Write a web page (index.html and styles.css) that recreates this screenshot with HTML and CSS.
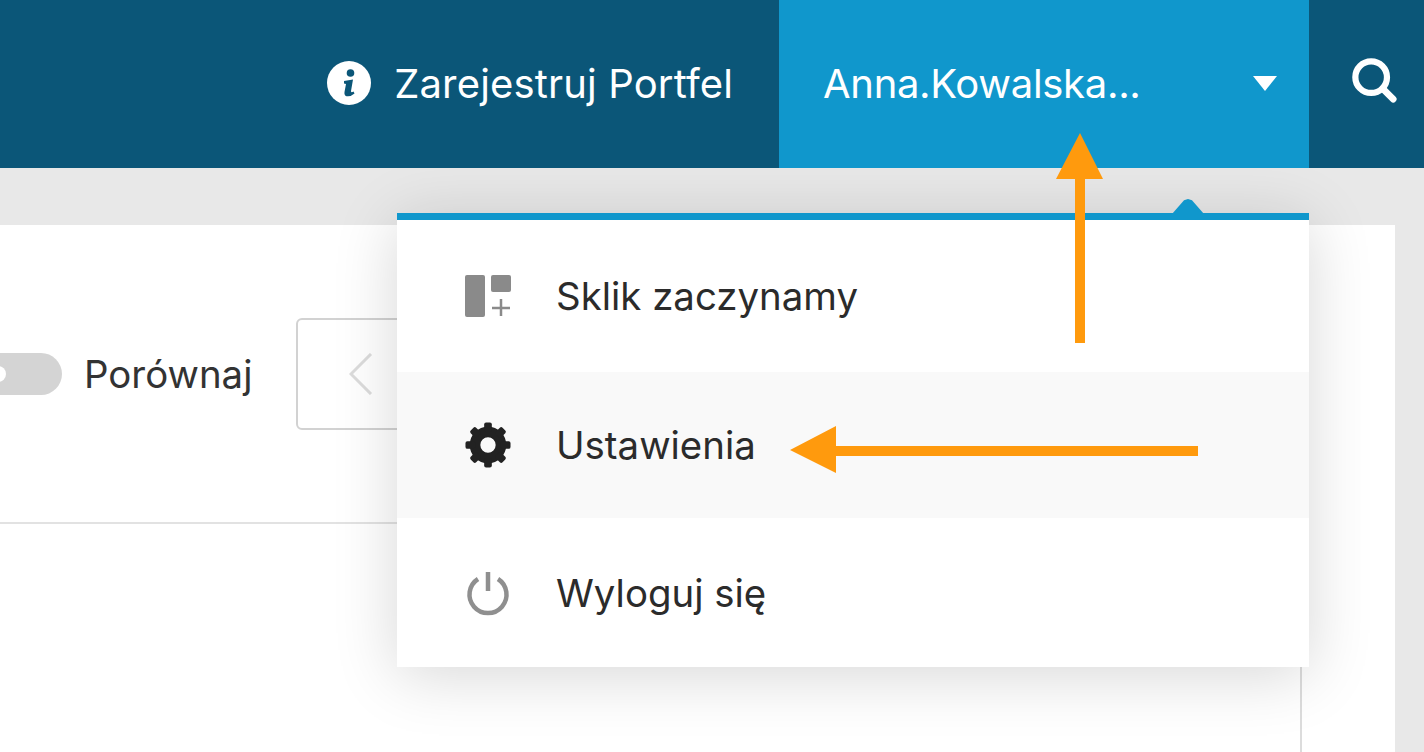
FILE: index.html
```html
<!DOCTYPE html>
<html lang="pl">
<head>
  <meta charset="UTF-8">
  <meta name="viewport" content="width=device-width, initial-scale=1.0">
  <title>Ustawienia konta</title>
  <link rel="stylesheet" href="styles.css">
</head>
<body>

  <!-- Top bar -->
  <header class="topbar">
    <a class="register-link">
      <svg class="info-icon" viewBox="0 0 44 44">
        <circle cx="22" cy="22" r="22" fill="#fff"/>
        <circle cx="23.500" cy="12" r="3.800" fill="#0b5678"/>
        <path d="M17 20 L26 18.500 L24 30 Q23.800 32 26.500 30.500 L27.500 32.500 Q23.500 36 19.500 35.200 Q17 34.500 17.500 31 L19 23 L17 22.500 Z" fill="#0b5678"/>
      </svg>
      <span>Zarejestruj Portfel</span>
    </a>
    <div class="user-menu">
      <span class="user-name">Anna.Kowalska...</span>
      <svg class="user-caret" viewBox="0 0 24 15"><path d="M0 0 H24 L12 15 Z" fill="#fff"/></svg>
    </div>
    <div class="search-btn">
      <svg viewBox="0 0 48 48" class="search-icon">
        <circle cx="20" cy="20" r="16.500" fill="none" stroke="#fff" stroke-width="6.500"/>
        <path d="M32 32 L43 43" stroke="#fff" stroke-width="7" stroke-linecap="round"/>
      </svg>
    </div>
  </header>

  <main class="content">
    <section class="panel">
      <div class="panel-inner">
        <div class="toolbar">
          <div class="toggle"><span class="toggle-knob"></span></div>
          <span class="toggle-label">Porównaj</span>
          <div class="pager">
            <svg viewBox="0 0 24 42" class="pager-icon"><path d="M22 1 L2 21 L22 41" fill="none" stroke="#dcdcdc" stroke-width="3"/></svg>
          </div>
        </div>
        <div class="panel-body"></div>
      </div>
    </section>

    <!-- Dropdown -->
    <div class="dropdown">
      <span class="dropdown-tip"></span>
      <div class="dropdown-item item-first">
        <span class="item-icon">
          <svg viewBox="0 0 46 42" width="46" height="42">
            <rect x="0" y="0" width="20" height="42" rx="2" fill="#8a8a8a"/>
            <rect x="26" y="0" width="20" height="17" rx="2" fill="#8a8a8a"/>
            <path d="M36 24 V41 M27 33 H45" stroke="#8a8a8a" stroke-width="2.500"/>
          </svg>
        </span>
        <span>Sklik zaczynamy</span>
      </div>
      <div class="dropdown-item item-active">
        <span class="item-icon">
          <svg viewBox="-24 -24 48 48" width="46" height="46">
            <circle r="13.500" fill="none" stroke="#222" stroke-width="11"/>
            <g fill="#222">
              <rect x="-4" y="-23.500" width="8" height="10" rx="2"/>
              <rect x="-4" y="-23.500" width="8" height="10" rx="2" transform="rotate(45)"/>
              <rect x="-4" y="-23.500" width="8" height="10" rx="2" transform="rotate(90)"/>
              <rect x="-4" y="-23.500" width="8" height="10" rx="2" transform="rotate(135)"/>
              <rect x="-4" y="-23.500" width="8" height="10" rx="2" transform="rotate(180)"/>
              <rect x="-4" y="-23.500" width="8" height="10" rx="2" transform="rotate(225)"/>
              <rect x="-4" y="-23.500" width="8" height="10" rx="2" transform="rotate(270)"/>
              <rect x="-4" y="-23.500" width="8" height="10" rx="2" transform="rotate(315)"/>
            </g>
          </svg>
        </span>
        <span>Ustawienia</span>
      </div>
      <div class="dropdown-item item-last">
        <span class="item-icon">
          <svg viewBox="0 0 46 46" width="46" height="46">
            <path d="M13 9 A18.500 18.500 0 1 0 33 9" fill="none" stroke="#8f8f8f" stroke-width="4.500"/>
            <path d="M23 2 V21" stroke="#8f8f8f" stroke-width="4.500"/>
          </svg>
        </span>
        <span>Wyloguj się</span>
      </div>
    </div>
  </main>

  <!-- Annotation arrows drawn on top of the screenshot -->
  <svg class="arrows" viewBox="0 0 1424 752" width="1424" height="752">
    <path d="M1075 343 V179 H1056 L1080 133 L1103 179 H1085 V343 Z" fill="#ff9a0d"/>
    <path d="M1198 446 H836 V426 L790 450 L836 473 V456 H1198 Z" fill="#ff9a0d"/>
  </svg>

</body>
</html>
```

FILE: styles.css
```css
* {
  margin: 0;
  padding: 0;
  box-sizing: border-box;
  font-family: 'Inter', 'Liberation Sans', sans-serif;
}

body {
  width: 1424px;
  height: 752px;
  overflow: hidden;
  position: relative;
  display: flex;
  flex-direction: column;
  background: #e8e8e8;
  color: #333;
}

.topbar {
  display: flex;
  justify-content: flex-end;
  align-items: stretch;
  height: 168px;
  background: #0b5678;
  color: white;
  font-size: 40px;
  position: relative;
  z-index: 2;
}

.register-link {
  display: flex;
  align-items: center;
  gap: 23px;
  margin-right: 46px;
  letter-spacing: 0.15px;
  padding-bottom: 2px;
}

.info-icon {
  width: 44px;
  height: 44px;
}

.user-menu {
  width: 530px;
  display: flex;
  align-items: center;
  justify-content: space-between;
  padding: 0 32px 2px 44px;
  background: #1097cc;
}

.user-name {
  letter-spacing: -0.3px;
}

.user-caret {
  width: 24px;
  height: 15px;
}

.search-btn {
  width: 115px;
  display: flex;
  align-items: center;
  padding: 0 0 6px 43px;
}

.search-icon {
  width: 46px;
  height: 46px;
}

.content {
  flex: 1;
  position: relative;
  padding: 57px 29px 0 0;
  display: flex;
  overflow: hidden;
}

.panel {
  flex: 1;
  background: white;
}

.panel-inner {
  height: 100%;
  margin-right: 93px;
  display: flex;
  flex-direction: column;
  overflow: hidden;
}

.toolbar {
  height: 299px;
  display: flex;
  align-items: center;
  border-bottom: 2px solid #e2e2e2;
  font-size: 38.400px;
}

.toggle {
  width: 82px;
  height: 42px;
  margin-left: -20px;
  margin-right: 22px;
  border-radius: 21px;
  background: #d4d4d4;
  display: flex;
  align-items: center;
  padding-left: 10px;
}

.toggle-knob {
  width: 16px;
  height: 16px;
  border-radius: 50%;
  background: white;
}

.toggle-label {
  width: 212px;
}

.pager {
  width: 300px;
  height: 112px;
  border: 2px solid #d2d2d2;
  border-radius: 6px;
  display: flex;
  align-items: center;
  padding-left: 51px;
}

.pager-icon {
  width: 24px;
  height: 42px;
}

.panel-body {
  flex: 1;
  border-right: 2px solid #dcdcdc;
}

.dropdown {
  position: absolute;
  top: 45px;
  right: 115px;
  width: 912px;
  background: white;
  border-top: 7px solid #1097cc;
  box-shadow: 0 8px 60px rgba(0, 0, 0, 0.16);
  font-size: 38.400px;
  color: #2b2b2b;
}

.dropdown-tip {
  position: absolute;
  top: -21px;
  left: 775px;
  width: 32px;
  height: 15px;
  background: #1097cc;
  clip-path: polygon(0 100%, 12px 8%, 16px 0, 20px 8%, 100% 100%);
}

.dropdown-item {
  display: flex;
  align-items: center;
  padding-left: 68px;
}

.item-first {
  height: 152px;
}

.item-active {
  height: 146px;
  background: #f9f9f9;
}

.item-last {
  height: 149px;
}

.item-icon {
  width: 91px;
  display: flex;
  align-items: center;
}

.arrows {
  position: absolute;
  top: 0;
  left: 0;
  z-index: 3;
}
```
